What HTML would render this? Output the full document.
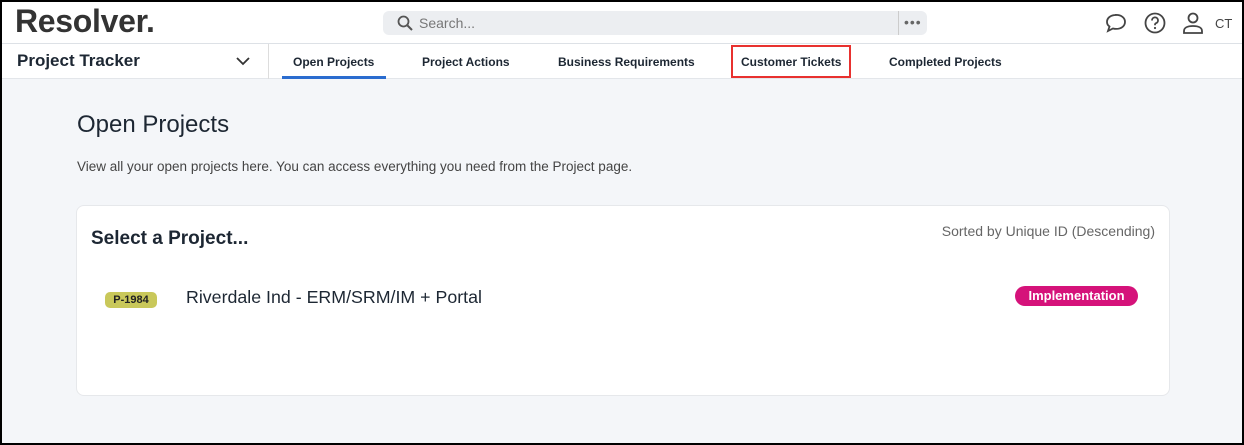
<!DOCTYPE html>
<html><head><style>
*{box-sizing:border-box;margin:0;padding:0}
body{width:1244px;height:445px;overflow:hidden;font-family:"Liberation Sans",sans-serif;background:#000}
.frame{position:absolute;left:2px;top:2px;width:1240px;height:441px;background:#f4f6f9;overflow:hidden}
.top{position:absolute;left:0;top:0;width:100%;height:42px;background:#fff;border-bottom:1px solid #dde1e6}
.logo{position:absolute;left:13px;top:1px;font-size:32px;font-weight:bold;color:#333;letter-spacing:-0.3px}
.search{position:absolute;left:381px;top:9px;width:544px;height:24px;background:#eceef1;border-radius:6px}
.search span{position:absolute;left:36px;top:4px;font-size:14px;color:#777}
.search .dots{position:absolute;left:515px;top:0;height:24px;border-left:1px solid #ccc;padding-left:5px;font-size:14px;color:#666;line-height:22px;letter-spacing:1px}
.nav{position:absolute;left:0;top:42px;width:100%;height:35px;background:#fff;border-bottom:1px solid #e3e6ea}
.nav .title{position:absolute;left:15px;top:7px;font-size:17px;font-weight:bold;color:#1d2733}
.sep{position:absolute;left:266px;top:0;height:35px;border-left:1px solid #ddd}
.tab{position:absolute;top:11px;font-size:12px;font-weight:bold;color:#1d2733}
h1{position:absolute;left:75px;top:109px;font-size:24px;font-weight:normal;color:#1d2733}
.desc{position:absolute;left:75px;top:157px;font-size:13.5px;color:#444}
.card{position:absolute;left:74px;top:203px;width:1094px;height:191px;background:#fff;border:1px solid #e6e8eb;border-radius:8px}
</style></head><body><div class="frame">
<div class="top">
<div class="logo">Resolver.</div>
<div class="search">
<svg style="position:absolute;left:14px;top:4px" width="16" height="16" viewBox="0 0 16 16"><circle cx="6.5" cy="6.5" r="5" fill="none" stroke="#555" stroke-width="1.8"/><path d="M10.5 10.5L15 15" stroke="#555" stroke-width="2"/></svg>
<span>Search...</span><div class="dots">•••</div></div>
<svg style="position:absolute;left:1103px;top:11px" width="22" height="20" viewBox="0 0 22 20"><path d="M11 2C5.5 2 2 5 2 9c0 2 1 3.5 2.5 4.5L3 18l5-2.5c1 .3 2 .4 3 .4 5.5 0 9-3 9-7s-3.5-7-9-7z" fill="none" stroke="#444" stroke-width="1.8"/></svg>
<svg style="position:absolute;left:1142px;top:10px" width="22" height="22" viewBox="0 0 22 22"><circle cx="11" cy="11" r="9.5" fill="none" stroke="#444" stroke-width="1.8"/><path d="M8 8.5a3 3 0 1 1 4 2.7c-.7.3-1 .8-1 1.6v.5" fill="none" stroke="#444" stroke-width="1.8"/><circle cx="11" cy="16" r="1.1" fill="#444"/></svg>
<svg style="position:absolute;left:1180px;top:9px" width="22" height="24" viewBox="0 0 22 24"><circle cx="11" cy="7" r="4.5" fill="none" stroke="#444" stroke-width="1.8"/><path d="M2 22v-2c0-3 3-5 9-5s9 2 9 5v2z" fill="none" stroke="#444" stroke-width="1.8"/></svg>
<div style="position:absolute;left:1213px;top:14px;font-size:13px;color:#444">CT</div>
</div>
<div class="nav">
<div class="title">Project Tracker</div>
<svg style="position:absolute;left:234px;top:13px" width="14" height="9" viewBox="0 0 14 9"><path d="M1 1l6 6 6-6" fill="none" stroke="#333" stroke-width="1.8"/></svg>
<div class="sep"></div>
<div class="tab" style="left:291px">Open Projects</div>
<div style="position:absolute;left:280px;top:32px;width:104px;height:3px;background:#2a6ccf"></div>
<div class="tab" style="left:420px">Project Actions</div>
<div class="tab" style="left:556px">Business Requirements</div>
<div style="position:absolute;left:729px;top:1px;width:120px;height:33px;border:2px solid #e8312f"></div>
<div class="tab" style="left:739px">Customer Tickets</div>
<div class="tab" style="left:887px">Completed Projects</div>
</div>
<h1>Open Projects</h1>
<div class="desc">View all your open projects here. You can access everything you need from the Project page.</div>
<div class="card">
<div style="position:absolute;left:14px;top:22px;font-size:19px;font-weight:bold;color:#1d2733">Select a Project...</div>
<div style="position:absolute;right:14px;top:17px;font-size:14px;color:#666">Sorted by Unique ID (Descending)</div>
<div style="position:absolute;left:28px;top:86px;width:52px;height:16px;background:#c9c85a;border-radius:5px;font-size:11px;font-weight:bold;text-align:center;line-height:16px;color:#222">P-1984</div>
<div style="position:absolute;left:109px;top:81px;font-size:17.8px;color:#1d2733">Riverdale Ind - ERM/SRM/IM + Portal</div>
<div style="position:absolute;left:938px;top:80px;width:123px;height:20px;background:#d5127a;border-radius:10px;font-size:13px;font-weight:bold;color:#fff;text-align:center;line-height:20px">Implementation</div>
</div>
</div></body></html>
